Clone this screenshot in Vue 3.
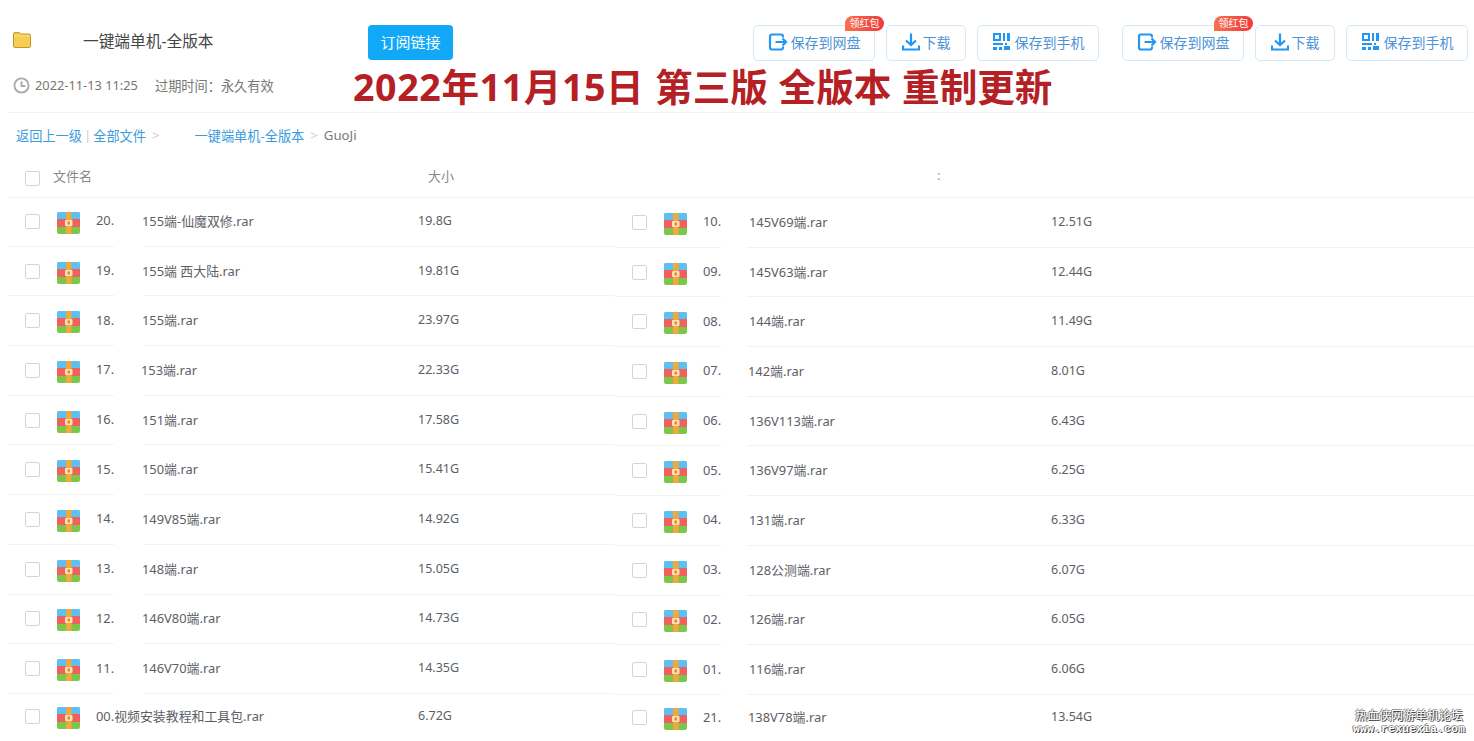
<script setup>
const left = [
  { no: '20.', name: '155端-仙魔双修.rar', size: '19.8G' },
  { no: '19.', name: '155端 西大陆.rar', size: '19.81G' },
  { no: '18.', name: '155端.rar', size: '23.97G' },
  { no: '17.', name: '153端.rar', size: '22.33G', nudge: true },
  { no: '16.', name: '151端.rar', size: '17.58G' },
  { no: '15.', name: '150端.rar', size: '15.41G' },
  { no: '14.', name: '149V85端.rar', size: '14.92G' },
  { no: '13.', name: '148端.rar', size: '15.05G' },
  { no: '12.', name: '146V80端.rar', size: '14.73G' },
  { no: '11.', name: '146V70端.rar', size: '14.35G' },
  { no: '', name: '00.视频安装教程和工具包.rar', size: '6.72G' }
]
const right = [
  { no: '10.', name: '145V69端.rar', size: '12.51G' },
  { no: '09.', name: '145V63端.rar', size: '12.44G' },
  { no: '08.', name: '144端.rar', size: '11.49G' },
  { no: '07.', name: '142端.rar', size: '8.01G', nudge: true },
  { no: '06.', name: '136V113端.rar', size: '6.43G' },
  { no: '05.', name: '136V97端.rar', size: '6.25G' },
  { no: '04.', name: '131端.rar', size: '6.33G' },
  { no: '03.', name: '128公测端.rar', size: '6.07G' },
  { no: '02.', name: '126端.rar', size: '6.05G' },
  { no: '01.', name: '116端.rar', size: '6.06G' },
  { no: '21.', name: '138V78端.rar', size: '13.54G', nudge: true }
]
const groups = [0, 1]
</script>

<template>
  <div class="page">
    <header class="head">
      <div class="top">
        <svg class="folder" viewBox="0 0 18 16">
          <path d="M.5 2Q.5 .5 2 .5H6L8 2H16Q17.500 2 17.500 3.500V14Q17.500 15.500 16 15.500H2Q.5 15.500 .5 14Z" fill="#f5cd52" stroke="#c9962c" />
          <path d="M1 4H17" stroke="#fbe08a" />
        </svg>
        <div class="title">一键端单机-全版本</div>
        <div class="sub-btn">订阅链接</div>
        <div class="actions">
          <div v-for="g in groups" :key="g" class="group">
            <div class="act save">
              <span class="badge">领红包</span>
              <svg class="ico" viewBox="0 0 20 18" fill="none" stroke="#2196f3" stroke-width="2.200">
                <path d="M15 4.500V3.500Q15 1.500 13 1.500H4Q2 1.500 2 3.500V14.500Q2 16.500 4 16.500H13Q15 16.500 15 14.500V13.500" />
                <path d="M7.500 9H18M14.500 5.500L18 9L14.500 12.500" />
              </svg>
              保存到网盘
            </div>
            <div class="act down">
              <svg class="ico ico-d" viewBox="0 0 18 18" fill="none" stroke="#2196f3" stroke-width="2.200">
                <path d="M9 .5V12M4 7.500L9 12L14 7.500" />
                <path d="M1 12.500V16.500H17V12.500" />
              </svg>
              下载
            </div>
            <div class="act phone">
              <svg class="ico" viewBox="0 0 20 18" fill="#2196f3">
                <path d="M1 0H9V8H1ZM3 2V6H7V2Z" fill-rule="evenodd" />
                <path d="M11 0H13V8H11ZM15 0H18V8H15ZM1 10H11V12H1ZM1 14H5V17H1ZM7 14H10V17H7ZM13 10H15V12H13ZM12 13H18V17H12Z" />
              </svg>
              保存到手机
            </div>
          </div>
        </div>
      </div>
      <div class="meta">
        <svg class="clock" viewBox="0 0 18 18" fill="none" stroke="#aaa" stroke-width="2">
          <circle cx="9" cy="9" r="7.500" />
          <path d="M9 4.500V9.500H13" />
        </svg>
        <span class="time">2022-11-13 11:25</span>
        <span class="expire">过期时间：永久有效</span>
      </div>
      <!-- 红字是盖在截图上的 -->
      <div class="banner"><span class="date">2022年11月15日</span> 第三版 全版本 重制更新</div>
    </header>

    <div class="crumb">
      <a>返回上一级</a>
      <i class="bar">|</i>
      <a>全部文件</a>
      <i class="gt">&gt;</i>
      <a class="far">一键端单机-全版本</a>
      <i class="gt">&gt;</i>
      <span class="cur">GuoJi</span>
    </div>

    <div class="thead">
      <span class="box"></span>
      <span class="th-name">文件名</span>
      <span class="th-size">大小</span>
      <span class="th-dot">:</span>
    </div>

    <div class="list">
      <div class="col col-l">
        <div v-for="(item, i) in left" :key="i" :class="['row', { last: i === 10 }]">
          <span class="box"></span>
          <svg class="rar" viewBox="0 0 23 22">
            <rect width="23" height="22" rx="2" fill="#7cc64b" />
            <path d="M0 7V2Q0 0 2 0H21Q23 0 23 2V7Z" fill="#5cc0f2" />
            <rect y="7" width="23" height="8" fill="#f0605c" />
            <rect x="9" width="5.500" height="22" fill="#f2a93b" />
            <rect x="8" y="8" width="7.500" height="6" rx="1" fill="#fbe3b5" />
            <rect x="10.500" y="9.500" width="2.500" height="3" fill="#e08a2e" />
          </svg>
          <span v-if="item.no" class="no">{{ item.no }}</span>
          <span :class="['name', { nudge: item.nudge }]">{{ item.name }}</span>
          <span class="size">{{ item.size }}</span>
        </div>
      </div>
      <div class="col col-r">
        <div v-for="(item, i) in right" :key="i" :class="['row', { last: i === 10 }]">
          <span class="box"></span>
          <svg class="rar" viewBox="0 0 23 22">
            <rect width="23" height="22" rx="2" fill="#7cc64b" />
            <path d="M0 7V2Q0 0 2 0H21Q23 0 23 2V7Z" fill="#5cc0f2" />
            <rect y="7" width="23" height="8" fill="#f0605c" />
            <rect x="9" width="5.500" height="22" fill="#f2a93b" />
            <rect x="8" y="8" width="7.500" height="6" rx="1" fill="#fbe3b5" />
            <rect x="10.500" y="9.500" width="2.500" height="3" fill="#e08a2e" />
          </svg>
          <span class="no">{{ item.no }}</span>
          <span :class="['name', { nudge: item.nudge }]">{{ item.name }}</span>
          <span class="size">{{ item.size }}</span>
        </div>
      </div>
    </div>

    <div class="mark">
      <div>热血侠网游单机论坛</div>
      <div class="mark-url">www.rexuexia.com</div>
    </div>
  </div>
</template>

<style scoped>
.page {
  position: relative;
  width: 1474px;
  height: 741px;
  overflow: hidden;
  background: #fff;
  color: #666;
  font-family: "Noto Sans", "Noto Sans CJK SC", sans-serif;
  font-size: 13px;
}
.head {
  position: relative;
  height: 112px;
  margin-left: 8px;
  border-bottom: 1px solid #f1f2f4;
}
.top {
  display: flex;
  align-items: flex-start;
  height: 36px;
  padding-top: 25px;
}
.folder {
  width: 18px;
  height: 16px;
  margin-top: 7px;
  margin-left: 5px;
}
.title {
  width: 285px;
  margin-left: 52px;
  font-size: 15.700px;
  line-height: 33px;
  color: #444;
}
.sub-btn {
  width: 85px;
  height: 35px;
  line-height: 34px;
  text-align: center;
  border-radius: 4px;
  background: #10a8f7;
  color: #fff;
  font-size: 15px;
}
.actions {
  display: flex;
  gap: 23px;
  margin-left: 300px;
}
.group {
  display: flex;
  gap: 11px;
}
.act {
  position: relative;
  display: flex;
  align-items: center;
  justify-content: center;
  box-sizing: border-box;
  height: 36px;
  padding-bottom: 2px;
  border: 1px solid #d3e9f8;
  border-radius: 5px;
  color: #4a93d8;
  font-size: 14px;
}
.save,
.phone {
  width: 122px;
}
.down {
  width: 80px;
}
.ico {
  width: 20px;
  height: 18px;
  margin-right: 3px;
}
.ico-d {
  width: 18px;
}
.badge {
  position: absolute;
  top: -10px;
  right: -10px;
  width: 39px;
  height: 15px;
  line-height: 15px;
  text-align: center;
  border-radius: 8px 8px 8px 0;
  background: linear-gradient(to right, #f8704f, #ee3a3a);
  color: #fff;
  font-size: 10px;
}
.meta {
  display: flex;
  align-items: center;
  height: 20px;
  margin-top: 14px;
  margin-left: 5px;
  font-size: 12.800px;
  color: #777;
}
.clock {
  width: 17px;
  height: 17px;
  margin-right: 5px;
}
.time {
  width: 120px;
}
.expire {
  font-size: 13.200px;
}
.banner {
  position: absolute;
  left: 345px;
  top: 61px;
  color: #b52025;
  font-size: 37.600px;
  font-weight: 700;
  line-height: 52px;
  word-spacing: 1px;
  white-space: nowrap;
}
.date {
  letter-spacing: 0.600px;
}
.crumb {
  display: flex;
  align-items: center;
  height: 44px;
  padding-left: 16px;
  font-size: 13.200px;
  color: #3b9bdc;
}
.crumb i {
  font-style: normal;
  color: #ccc;
}
.bar {
  margin: 0 2px;
}
.gt {
  margin: 0 6px;
}
.far {
  margin-left: 29px;
}
.cur {
  color: #777;
}
.box {
  flex: none;
  box-sizing: border-box;
  width: 15px;
  height: 15px;
  border: 1px solid #d4d4d4;
  border-radius: 2px;
}
.thead {
  display: flex;
  align-items: center;
  box-sizing: border-box;
  height: 41px;
  margin-left: 8px;
  margin-bottom: -1px;
  padding-left: 17px;
  padding-bottom: 4px;
  border-bottom: 1px solid #f1f2f4;
  color: #888;
}
.thead .box {
  margin-top: 7px;
}
.th-name {
  margin-left: 13px;
  width: 375px;
}
.th-size {
  width: 509px;
}
.th-dot {
  color: #999;
}
.list {
  display: grid;
  grid-template-columns: 607px 1fr;
  margin-left: 8px;
}
.row {
  position: relative;
  display: flex;
  align-items: center;
  box-sizing: border-box;
  height: 49.700px;
  padding-left: 17px;
  border-bottom: 1px solid #f1f2f4;
  color: #5c6066;
  font-size: 12.900px;
}
/* 分割线在序号后面是断开的 */
.row::after {
  content: "";
  position: absolute;
  left: 106px;
  bottom: -1px;
  width: 30px;
  height: 1px;
  background: #fff;
}
.col-r .row::after {
  width: 26px;
}
.col-r {
  padding-top: 1px;
}
.last {
  height: 46px;
  border-bottom: none;
}
.last::after {
  display: none;
}
.rar {
  flex: none;
  width: 23px;
  height: 22px;
  margin-top: 3px;
  margin-left: 17px;
}
.no,
.name,
.size {
  margin-bottom: 2px;
}
.no {
  flex: none;
  width: 46px;
  margin-left: 16px;
}
.name {
  flex: none;
  white-space: nowrap;
  width: 276px;
}
.size {
  font-size: 12.500px;
}
.nudge {
  margin-left: -1px;
  margin-right: 1px;
}
.col-l .last .name {
  margin-left: 16px;
  width: 322px;
}
.col-r .name {
  width: 302px;
}
.mark {
  position: absolute;
  right: 9px;
  bottom: 6px;
  color: #fff;
  font-size: 12px;
  line-height: 13px;
  text-align: center;
  text-shadow: 1px 1px 0 #444, -1px 0 0 #777, 0 -1px 0 #999;
}
.mark-url {
  font-family: "Liberation Mono", monospace;
  font-size: 11.500px;
  font-weight: 700;
  letter-spacing: 0.100px;
}
</style>
